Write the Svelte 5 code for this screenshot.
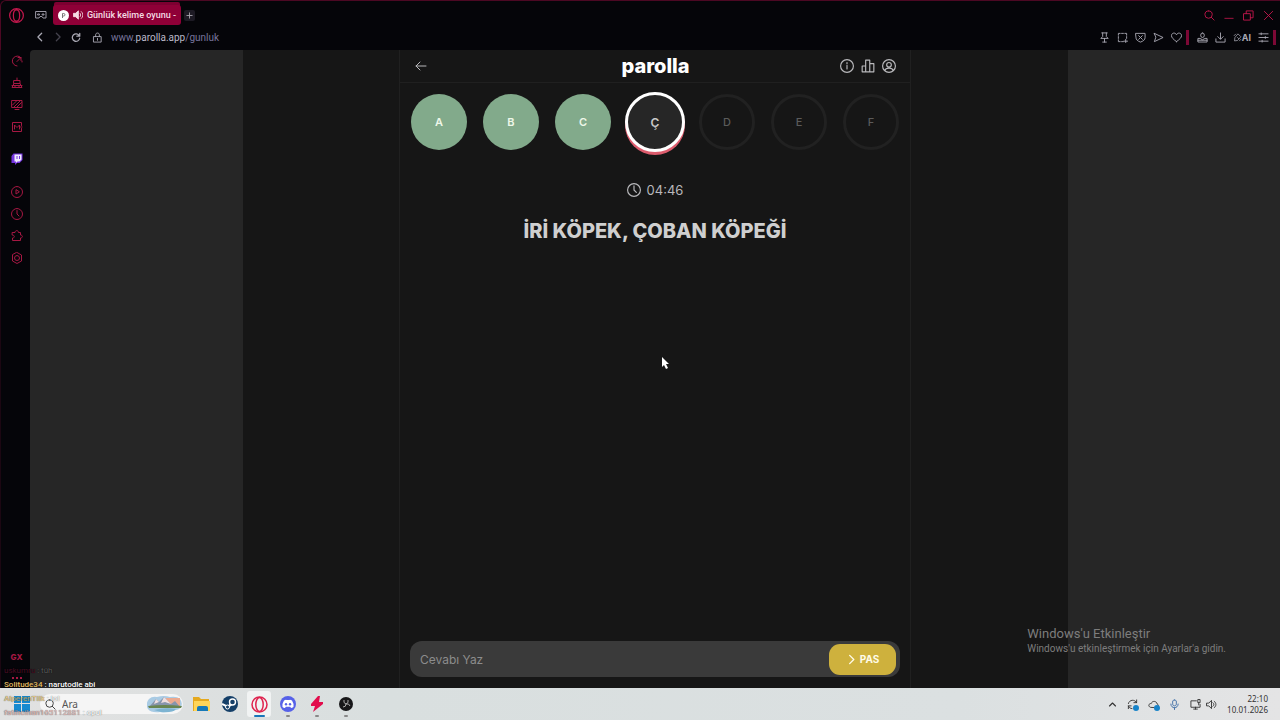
<script>
  let answer = $state("");

  const letters = [
    { char: "A", status: "correct" },
    { char: "B", status: "correct" },
    { char: "C", status: "correct" },
    { char: "Ç", status: "active" },
    { char: "D", status: "idle" },
    { char: "E", status: "idle" },
    { char: "F", status: "idle" },
  ];

  const icons = {
    opera: "M12 1a11 11 0 1 0 0 22 11 11 0 1 0 0-22M12 3c-3 0-5 4-5 9s2 9 5 9 5-4 5-9-2-9-5-9",
    workspace: "M2 5h20v13h-6l-2-3h-4l-2 3H2zM6 10h3v2H6zM15 10h3v2h-3z",
    gauge: "M17 3A10 10 0 1 0 12 22M12 13l8-8M14 5h6v6M22 12v2",
    cleaner: "M12 2v5M6 7h12v6H6zM6 13l-4 8h20l-4-8M2 17h20M8 21v-3M16 21v-3",
    player: "M2 3h20v14H2zM8 21h8M3 12l9-9M5 17L19 3M11 17L21 7",
    mod: "M21 9V3H3v18h18v-6M7 16V8l5 5 5-5v8M19 12h3",
    play: "M12 1a11 11 0 1 0 0 22 11 11 0 1 0 0-22M10 8v8l6-4z",
    clock: "M12 1a11 11 0 1 0 0 22 11 11 0 1 0 0-22M12 5v7l4 4",
    puzzle: "M3 5h5c0-5 7-5 7 0h4v5c5 0 5 6 0 6v5H3v-5c5 0 5-6 0-6z",
    settings: "M12 1l9 5v12l-9 5-9-5V6zM12 7a5 5 0 1 0 0 10 5 5 0 1 0 0-10",
    back: "M16 3l-9 9 9 9",
    forward: "M8 3l9 9-9 9",
    reload: "M21 3v7h-7M20 9a9 9 0 1 0 1 6",
    sync: "M3 10c2-9 14-10 18-2M21 2v6h-6M3 21v-6h6M3 15c1 3 4 6 8 6",
    lock: "M4 10h16v12H4zM8 10V6c0-5 8-5 8 0v4M12 14v4",
    search: "M10 2a8 8 0 1 0 0 16 8 8 0 1 0 0-16M16 16l6 6",
    minimize: "M2 20h20",
    restore: "M2 8h14v14H2zM7 8V2h15v15h-6",
    close: "M3 3l18 18M21 3L3 21",
    pin: "M6 2h12M8 2v8l-4 4h16l-4-4V2M12 14v8M8 22h8",
    capture: "M3 7V3h4M10 3h4M17 3h4v4M21 10v4M3 10v4M3 17v4h4M10 21h4M19 16v7M15 20h8",
    shield: "M2 3h20v9c0 5-4 8-10 10C6 20 2 17 2 12zM8 8l8 8M16 8l-8 8",
    send: "M3 3l19 9-19 9 3-9z",
    heart: "M12 21C5 16 1 12 1 8c0-6 8-8 11-2 3-6 11-4 11 2 0 4-4 8-11 13z",
    profile: "M12 2a4 5 0 1 0 0 10 4 5 0 1 0 0-10M2 21v-7h5l5 3 5-3h5v7zM2 18h20",
    download: "M12 2v13M6 10l6 6 6-6M2 15v7h20v-7",
    pen: "M14 3l7 7-9 10-8 1 1-8zM3 7l4-4M17 21l4-4M12 12l3 3",
    sliders: "M2 4h20M2 12h20M2 20h20M7 2v4M16 10v4M9 18v4",
    left: "M22 12H2M10 4l-8 8 8 8",
    info: "M12 1a11 11 0 1 0 0 22 11 11 0 1 0 0-22M12 11v6M12 6v2",
    chart: "M2 12h6v10H2zM8 2h7v20H8zM15 8h7v14h-7z",
    user: "M12 1a11 11 0 1 0 0 22 11 11 0 1 0 0-22M12 6a4 4 0 1 0 0 8 4 4 0 1 0 0-8M5 20c1-6 13-6 14 0",
    chevronUp: "M4 16l8-8 8 8",
    mic: "M12 2c-5 0-4 4-4 7s0 6 4 6 4-3 4-6 1-7-4-7M4 11c0 11 16 11 16 0M12 19v4",
    display: "M14 4H2v14h20v-6M8 22h8M12 18v4M17 2v6h5V2zM19 8v5",
    speaker: "M2 9h4l6-6v18l-6-6H2zM15 8c3 2 3 6 0 8M18 5c5 4 5 10 0 14",
    plus: "M12 3v18M3 12h18",
  };

  const sidebarTop = ["gauge", "cleaner", "player", "mod"];
  const sidebarBottom = ["play", "clock", "puzzle", "settings"];
  const pageTools = ["pin", "capture", "shield", "send", "heart"];
</script>

{#snippet icon(name, size = 12, weight = 2)}
  <svg class="icon" width={size} height={size} viewBox="0 0 24 24" stroke-width={weight} aria-hidden="true">
    <path d={icons[name]} />
  </svg>
{/snippet}

<div class="desktop">
  <div class="browser">
    <header class="chrome">
      <div class="tabs">
        <button class="tabs_opera" aria-label="Opera">{@render icon("opera", 15, 2)}</button>
        <button class="tabs_space" aria-label="Workspace">{@render icon("workspace", 12)}</button>
        <button class="tab">
          <svg width="11" height="11" viewBox="0 0 11 11" aria-hidden="true">
            <circle cx="5.500" cy="5.500" r="5.500" fill="#fff" />
            <path d="M4.500 8V3.500h1.200a1.200 1.200 0 0 1 0 2.500H4.500" fill="none" stroke="#777" />
          </svg>
          <svg width="10" height="10" viewBox="0 0 24 24" fill="#f5dce4" stroke="#f5dce4" stroke-width="2" aria-hidden="true">
            <path d="M1 8h5l7-6v20l-7-6H1z" />
            <path d="M16 7c3 2 3 8 0 10M19 3c6 5 6 13 0 18" fill="none" />
          </svg>
          <span class="tab_title">Günlük kelime oyunu -</span>
        </button>
        <button class="tabs_new" aria-label="New tab">{@render icon("plus", 7, 3)}</button>
        <div class="windowButtons">
          <button aria-label="Search tabs">{@render icon("search", 11)}</button>
          <button aria-label="Minimize">{@render icon("minimize", 10)}</button>
          <button aria-label="Restore">{@render icon("restore", 11)}</button>
          <button aria-label="Close">{@render icon("close", 11)}</button>
        </div>
      </div>
      <div class="address">
        <button aria-label="Back">{@render icon("back", 10, 3)}</button>
        <button class="dim" aria-label="Forward">{@render icon("forward", 10, 3)}</button>
        <button aria-label="Reload">{@render icon("reload", 10, 3)}</button>
        <button class="address_lock" aria-label="Site info">{@render icon("lock", 11)}</button>
        <a class="address_url" href="#gunluk">www.<b>parolla.app</b>/gunluk</a>
        <div class="tools">
          {#each pageTools as name}
            <button aria-label={name}>{@render icon(name, 11)}</button>
          {/each}
        </div>
        <i class="divider"></i>
        <div class="tools">
          <button aria-label="Profile">{@render icon("profile", 11)}</button>
          <button aria-label="Downloads">{@render icon("download", 11)}</button>
          <button class="ai">{@render icon("pen", 9)}AI</button>
          <button aria-label="Easy setup">{@render icon("sliders", 11)}</button>
        </div>
        <i class="divider"></i>
      </div>
    </header>

    <nav class="sidebar">
      {#each sidebarTop as name}
        <button aria-label={name}>{@render icon(name)}</button>
      {/each}
      <button class="sidebar_twitch" aria-label="Twitch">
        <svg width="12" height="12" viewBox="0 0 24 24" aria-hidden="true">
          <path d="M5 1h18v13l-6 6h-5l-4 4v-4H1V6z" fill="#7435df" />
          <path d="M7 3h14v10l-4 4h-4l-3 3v-3H7z" fill="#f1eaff" />
          <path d="M12 6v6M17 6v6" stroke="#7435df" stroke-width="2" />
        </svg>
      </button>
      {#each sidebarBottom as name}
        <button aria-label={name}>{@render icon(name)}</button>
      {/each}
      <button class="sidebar_gx">GX</button>
      <button class="sidebar_more" aria-label="More">
        <svg width="10" height="2" viewBox="0 0 10 2" fill="currentColor" aria-hidden="true">
          <path d="M0 0h2v2H0zM4 0h2v2H4zM8 0h2v2H8z" />
        </svg>
      </button>
    </nav>

    <div class="page">
      <div class="stage">
        <main class="game">
          <header class="game_header">
            <button aria-label="Geri">{@render icon("left", 12)}</button>
            <h1>parolla</h1>
            <div class="game_actions">
              <button aria-label="Bilgi">{@render icon("info", 14)}</button>
              <button aria-label="İstatistik">{@render icon("chart", 14)}</button>
              <button aria-label="Profil">{@render icon("user", 14)}</button>
            </div>
          </header>
          <ul class="letters">
            {#each letters as letter}
              <li class="letter letter-{letter.status}">{letter.char}</li>
            {/each}
          </ul>
          <div class="timer">{@render icon("clock", 14)}<span>04:46</span></div>
          <h2 class="question">İRİ KÖPEK, ÇOBAN KÖPEĞİ</h2>
          <form class="answer" onsubmit={(event) => event.preventDefault()}>
            <input type="text" aria-label="Cevabı Yaz" placeholder="Cevabı Yaz" bind:value={answer} />
            <button type="submit">{@render icon("forward", 11, 3)}PAS</button>
          </form>
        </main>
      </div>
    </div>
  </div>

  <footer class="taskbar">
    <button class="start" aria-label="Başlat">
      <svg width="16" height="16" viewBox="0 0 16 16" fill="#188bd0" aria-hidden="true">
        <path d="M0 0h7v7H0zM8 0h8v7H8zM0 8h7v8H0zM8 8h8v8H8z" />
      </svg>
    </button>
    <label class="search">
      {@render icon("search", 11, 2)}
      <input type="text" placeholder="Ara" aria-label="Ara" />
      <svg width="36" height="18" viewBox="0 0 36 18" aria-hidden="true">
        <path d="M2 4q3-3 8-2 7-2 13 0 7-1 10 2 3 4 1 8-3 4-9 3-5 3-12 2-9 1-12-3-3-5 1-10z" fill="#a9cbe4" />
        <path d="M19 3h14v8H19z" fill="#eba98f" />
        <path d="M2 12l7-8 3 3 5-5 7 7 4-3 5 6z" fill="#8795ad" />
        <path d="M9 4l3 3-5 2zM17 2l7 7-6-2-4 1z" fill="#efdfe0" />
        <path d="M1 11q16-2 34 0l-1 2H2z" fill="#688551" />
        <path d="M7 15q11-3 22-1-3 4-15 3z" fill="#7db4d2" />
      </svg>
    </label>
    <div class="apps">
      <button aria-label="Dosya Gezgini">
        <svg width="17" height="16" viewBox="0 0 17 16" aria-hidden="true">
          <path d="M0 1h6l2 2h8v12H0z" fill="#e5a91f" />
          <path d="M1 5h16v10H1z" fill="#ffd558" />
          <path d="M4 15v-3q0-2 2-2h7q2 0 2 2v3z" fill="#1679b8" />
        </svg>
      </button>
      <button aria-label="Steam">
        <svg width="16" height="16" viewBox="0 0 16 16" aria-hidden="true">
          <circle cx="8" cy="8" r="8" fill="#143f68" />
          <path d="M0 8l6 3 4-3M10 6L7 10" stroke="#fff" stroke-width="2" fill="none" />
          <circle cx="10.500" cy="6" r="3" fill="#143f68" stroke="#fff" stroke-width="1.400" />
          <circle cx="5.500" cy="11" r="2" fill="#143f68" stroke="#fff" />
        </svg>
      </button>
      <button class="current" aria-label="Opera GX">
        <svg width="17" height="17" viewBox="0 0 17 17" fill="none" stroke="#df234f" stroke-width="1.500" aria-hidden="true">
          <circle cx="8.500" cy="8.500" r="7.500" />
          <ellipse cx="8.500" cy="8.500" rx="3.700" ry="7" />
        </svg>
      </button>
      <button class="running" aria-label="Discord">
        <svg width="16" height="16" viewBox="0 0 16 16" aria-hidden="true">
          <circle cx="8" cy="8" r="8" fill="#5661e8" />
          <path d="M4 4.500q2-1 2.500-.500h3q.500-.500 2.500.500 2 3 1.500 6.500-1.500 1-2.500 1l-.800-1.200H5.800L5 12q-1.500 0-2.500-1Q2 7.500 4 4.500z" fill="#fff" />
          <circle cx="6" cy="8.200" r="1.200" fill="#5661e8" />
          <circle cx="10" cy="8.200" r="1.200" fill="#5661e8" />
        </svg>
      </button>
      <button class="running" aria-label="Bolt">
        <svg width="14" height="16" viewBox="0 0 14 16" fill="#e20c4c" aria-hidden="true">
          <path d="M8 0L1 8v2h4l-2 6 10-8V6H9l1-6z" />
        </svg>
      </button>
      <button class="running" aria-label="OBS">
        <svg width="14" height="14" viewBox="0 0 14 14" aria-hidden="true">
          <circle cx="7" cy="7" r="7" fill="#171719" />
          <path d="M5 3q-1 3 2 4 3-1 4 2M7 7q0 3-3 3M7 7q3-1 2-4" fill="none" stroke="#aaa" />
        </svg>
      </button>
    </div>
    <div class="tray">
      <button aria-label="Gizli simgeler">{@render icon("chevronUp", 9, 3)}</button>
      <button class="notice" aria-label="Güncelleme">{@render icon("sync", 11)}</button>
      <button class="notice" aria-label="OneDrive">
        <svg class="icon" width="11" height="11" viewBox="0 0 24 24" stroke-width="2" aria-hidden="true">
          <path d="M5 18c-6-2-3-9 2-8 2-7 12-6 13 1 5 2 4 8-1 8z" />
        </svg>
      </button>
      <button class="tray_mic" aria-label="Mikrofon">{@render icon("mic", 11)}</button>
      <button class="tray_sound" aria-label="Ağ ve ses">{@render icon("display", 11)}{@render icon("speaker", 11)}</button>
      <time>22:10<br />10.01.2026</time>
    </div>
  </footer>

  <div class="watermark">
    <p class="watermark_title">Windows'u Etkinleştir</p>
    <p>Windows'u etkinleştirmek için Ayarlar'a gidin.</p>
  </div>

  <div class="chat">
    <p class="chat_faded"><b>uskumru</b> : tüh</p>
    <p><b>Solitude34</b> : narutodle abi</p>
    <p class="chat_low"><b>AlperenTilk</b> : lol</p>
    <p class="chat_low chat_rose"><b>fatihcihan165112881</b> : cpul</p>
  </div>

  <svg class="cursor" width="9" height="14" viewBox="0 0 9 14" aria-hidden="true">
    <path d="M1 1v10l2-2 2 4 2-1-2-4h3z" fill="#fff" />
  </svg>
</div>

<style>
  :global(body) {
    margin: 0;
    background: #050509;
  }

  .desktop {
    position: relative;
    display: flex;
    flex-direction: column;
    min-height: 100vh;
    overflow: hidden;
    font-family: Inter, "Liberation Sans", sans-serif;
    color: #b8b8bb;
  }

  button {
    display: flex;
    align-items: center;
    justify-content: center;
    padding: 0;
    border: 0;
    background: none;
    color: inherit;
    font: inherit;
  }

  input {
    min-width: 0;
    padding: 0;
    border: 0;
    outline: 0;
    background: none;
    font: inherit;
    color: inherit;
  }

  svg {
    flex: none;
  }

  .icon {
    fill: none;
    stroke: currentColor;
    stroke-linecap: round;
    stroke-linejoin: round;
  }

  .browser {
    flex: 1;
    display: grid;
    grid-template-columns: 30px 1fr;
    grid-template-rows: 50px 1fr;
    background: #050509;
  }

  .chrome {
    grid-column: 1 / -1;
    border-top: 1px solid #4c0823;
    border-left: 1px solid #4c0823;
    border-top-left-radius: 6px;
  }

  .tabs {
    display: flex;
    align-items: center;
    height: 28px;
    padding-left: 8px;
    color: #c2174c;
  }

  .tabs_space {
    margin: 0 6px 0 11px;
    color: #9b98a4;
  }

  .tab {
    gap: 4px;
    width: 128px;
    height: 20px;
    padding: 0 6px;
    border-radius: 3px;
    background: #8f0037;
    box-shadow: 0 -4px 0 -1px #7d0031;
    color: #f5dce4;
    font: 500 9px Roboto, sans-serif;
  }

  .tab_title {
    flex: 1;
    text-align: left;
    white-space: nowrap;
  }

  .tabs_new {
    width: 11px;
    height: 11px;
    margin-left: 3px;
    border-radius: 2px;
    background: #1d1a24;
    color: #aaa7b0;
  }

  .windowButtons {
    display: flex;
    gap: 9px;
    margin-left: auto;
    padding-right: 6px;
  }

  .address {
    display: flex;
    align-items: center;
    gap: 8px;
    height: 16px;
    padding: 0 4px 0 34px;
    color: #aaa9b4;
  }

  .dim {
    color: #45434e;
  }

  .address_lock {
    margin-left: 3px;
  }

  .address_url {
    flex: 1;
    color: #77749c;
    font: 10px Roboto, sans-serif;
    text-decoration: none;
  }

  .address_url b {
    color: #bab9c8;
    font-weight: 400;
  }

  .tools {
    display: flex;
    gap: 7px;
  }

  .ai {
    font-size: 9px;
    font-weight: 700;
  }

  .divider {
    width: 3px;
    height: 15px;
    margin: 0 0 0 -4px;
    background: #7c0835;
  }

  .sidebar {
    display: flex;
    flex-direction: column;
    align-items: center;
    gap: 10px;
    padding: 5px 0 9px 2px;
    border-left: 1px solid #1c0712;
    box-sizing: border-box;
    color: #a61843;
  }

  .sidebar_twitch {
    margin: 10px 0 11px;
  }

  .sidebar_gx {
    margin-top: auto;
    font-size: 8px;
    font-weight: 800;
  }

  .sidebar_more {
    margin-top: 5px;
  }

  .page {
    display: flex;
    justify-content: center;
    border-top-left-radius: 4px;
    background: #262626;
  }

  .stage {
    display: flex;
    justify-content: center;
    width: 66%;
    background: #161616;
  }

  .game {
    display: flex;
    flex-direction: column;
    width: 100%;
    max-width: 510px;
    border: solid #202020;
    border-width: 0 1px;
  }

  .game_header {
    display: grid;
    grid-template-columns: 1fr auto 1fr;
    align-items: center;
    height: 32px;
    padding: 0 14px 0 15px;
    border-bottom: 1px solid #202020;
  }

  .game_header > button {
    justify-self: start;
  }

  .game_header h1 {
    margin: 0;
    color: #fff;
    font: 800 20px/24px Inter, sans-serif;
  }

  .game_actions {
    display: flex;
    justify-content: flex-end;
    gap: 7px;
  }

  .letters {
    display: flex;
    align-items: center;
    justify-content: center;
    gap: 16px;
    height: 60px;
    margin: 9px 0 0;
    padding: 0;
    list-style: none;
  }

  .letter {
    display: grid;
    place-items: center;
    width: 56px;
    height: 56px;
    box-sizing: border-box;
    border-radius: 50%;
    font-size: 11px;
    font-weight: 600;
  }

  .letter-correct {
    background: #82aa8b;
    color: #eef7e9;
  }

  .letter-active {
    width: 60px;
    height: 60px;
    margin: 0 -2px;
    border: 3px solid #fff;
    background: #262626;
    box-shadow: 0 3px 0 #dc5c6d;
    color: #c8c8c8;
    font-size: 12px;
  }

  .letter-idle {
    border: 3px solid #212121;
    color: #5b5b5b;
    font-weight: 500;
  }

  .timer {
    display: flex;
    align-items: center;
    justify-content: center;
    gap: 6px;
    margin-top: 28px;
    font-size: 13px;
    line-height: 20px;
  }

  .question {
    margin: 18px 0 0;
    padding: 0 10px;
    color: #cfcfcf;
    font-size: 20px;
    font-weight: 800;
    line-height: 26px;
    text-align: center;
  }

  .answer {
    display: flex;
    align-items: center;
    height: 36px;
    margin: auto 10px 11px;
    padding: 0 4px 0 10px;
    border-radius: 12px;
    background: #3a3a3a;
    font-size: 12px;
  }

  .answer input {
    flex: 1;
  }

  .answer input::placeholder {
    color: #8c8c8c;
  }

  .answer button {
    gap: 3px;
    width: 67px;
    height: 31px;
    border-radius: 11px;
    background: #ceb13d;
    color: #fffbe8;
    font-size: 10px;
    font-weight: 700;
  }

  .taskbar {
    display: flex;
    align-items: center;
    height: 32px;
    padding: 0 12px 0 14px;
    background: linear-gradient(90deg, #e1e1e1, #d9dfdf 30%, #dbe0e1 75%, #e4e4e5);
    color: #333;
    font-family: "Noto Sans", sans-serif;
  }

  .search {
    display: flex;
    align-items: center;
    gap: 6px;
    width: 138px;
    height: 20px;
    margin-left: 10px;
    padding-left: 5px;
    border-radius: 10px;
    background: #f5f5f5;
    font-size: 10px;
  }

  .search input {
    flex: 1;
  }

  .search input::placeholder {
    color: #555;
  }

  .apps {
    display: flex;
    gap: 5px;
    margin-left: 6px;
  }

  .apps button {
    position: relative;
    width: 24px;
    height: 26px;
    border-radius: 3px;
  }

  .apps .current {
    background: #f1f3f3;
  }

  .current::after,
  .running::after {
    content: "";
    position: absolute;
    bottom: 0;
    width: 4px;
    height: 2px;
    border-radius: 1px;
    background: #888;
  }

  .current::after {
    width: 11px;
    background: #1976b9;
  }

  .tray {
    display: flex;
    align-items: center;
    gap: 10px;
    margin-left: auto;
  }

  .notice {
    position: relative;
  }

  .notice::after {
    content: "";
    position: absolute;
    right: -1px;
    bottom: -1px;
    width: 6px;
    height: 6px;
    border-radius: 50%;
    background: #1683c9;
  }

  .tray_mic {
    color: #3b6ba5;
  }

  .tray_sound {
    gap: 5px;
  }

  .tray time {
    font-size: 8px;
    line-height: 11px;
    text-align: right;
  }

  .watermark {
    position: absolute;
    right: 54px;
    bottom: 64px;
    color: #7d7d7d;
    font: 10px/14px Roboto, sans-serif;
  }

  .watermark p,
  .chat p {
    margin: 0;
  }

  .watermark .watermark_title {
    font-size: 13px;
    line-height: 16px;
  }

  .chat {
    position: absolute;
    left: 4px;
    bottom: 0;
    color: #fff;
    font: 500 8px/14px Roboto, sans-serif;
    text-shadow: 0 0 1px #000;
  }

  .chat b {
    color: #e4bd63;
    font-weight: 500;
  }

  .chat .chat_faded {
    color: #5b5b5b;
    font-weight: 400;
  }

  .chat .chat_faded b {
    color: #490d24;
    font-weight: 400;
  }

  .chat_low {
    opacity: 0.7;
  }

  .chat .chat_rose b {
    color: #d8a6a6;
  }

  .cursor {
    position: absolute;
    top: 356px;
    left: 661px;
  }
</style>
